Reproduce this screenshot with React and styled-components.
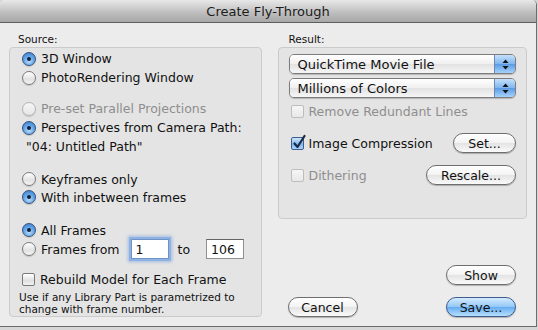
import React from 'react';
import styled, { createGlobalStyle } from 'styled-components';

const GlobalStyle = createGlobalStyle`
body{
  margin:0;
  background:#d6d6d6;
  font-family:"DejaVu Sans","Liberation Sans",sans-serif;
}
`;

const Window = styled.div`
width:536px;
height:326px;
background:#ececec;
border-right:1px solid #6d6d6d;
border-bottom:1px solid #6d6d6d;
border-radius:5px 5px 0 0;
overflow:hidden;
display:flex;
flex-direction:column;
box-sizing:content-box;
`;

const TitleBar = styled.div`
height:22px;
flex-shrink:0;
display:flex;
align-items:center;
justify-content:center;
background:linear-gradient(#e8e8e8,#bcbcbc 60%,#a8a8a8);
border-bottom:1px solid #5e5e5e;
font-size:13px;
color:#1c1c1c;
`;

const Body = styled.div`
flex:1;
display:flex;
flex-direction:row;
gap:16px;
padding:10px 9px 0 9px;
`;

const Column = styled.div`
display:flex;
flex-direction:column;
width:${p => p.w}px;
`;

const GroupLabel = styled.div`
font-size:10.5px;
line-height:13px;
color:#111;
padding-left:${p => p.indent}px;
margin-bottom:1px;
`;

const GroupBox = styled.div`
display:flex;
flex-direction:column;
background:#e4e4e4;
border:1px solid #cbcbcb;
border-radius:4px;
height:${p => p.h}px;
box-sizing:border-box;
padding:${p => p.pad};
`;

const Row = styled.div`
display:flex;
align-items:center;
height:${p => p.h || 19}px;
margin-top:${p => p.mt || 0}px;
font-size:12.5px;
color:${p => (p.disabled ? '#8e8e8e' : '#111')};
white-space:nowrap;
`;

const RadioDot = styled.span`
width:14px;
height:14px;
border-radius:50%;
box-sizing:border-box;
flex-shrink:0;
margin-right:5px;
display:flex;
align-items:center;
justify-content:center;
border:1px solid ${p => (p.on ? '#33527f' : p.disabled ? '#b4b4b4' : '#7a7a7a')};
background:${p =>
    p.on
      ? 'radial-gradient(circle at 50% 70%,#b8dcfb,#5d9fe4 55%,#3b78c8)'
      : p.disabled
      ? 'linear-gradient(#f6f6f6,#e6e6e6)'
      : 'linear-gradient(#ffffff,#e2e2e2 60%,#f4f4f4)'};
box-shadow:0 1px 1px rgba(0,0,0,0.15);
&::after{
  content:'';
  display:${p => (p.on ? 'block' : 'none')};
  width:4px;
  height:4px;
  border-radius:50%;
  background:#10213a;
}
`;

const CheckBox = styled.span`
width:13px;
height:13px;
border-radius:2px;
box-sizing:border-box;
flex-shrink:0;
margin-right:5px;
position:relative;
border:1px solid ${p => (p.on ? '#3c5f90' : p.disabled ? '#bdbdbd' : '#7a7a7a')};
background:${p =>
    p.on
      ? 'linear-gradient(#cfe6fc,#7fb7ef 55%,#a9d2f8)'
      : p.disabled
      ? 'linear-gradient(#f6f6f6,#e8e8e8)'
      : 'linear-gradient(#ffffff,#e0e0e0 60%,#f2f2f2)'};
`;

const Tick = styled.svg`
position:absolute;
left:0;
top:-4px;
`;

const PathName = styled.div`
font-size:12.5px;
color:#111;
height:19px;
display:flex;
align-items:center;
padding-left:4px;
`;

const NumField = styled.input`
width:38px;
height:20px;
box-sizing:border-box;
border:1px solid ${p => (p.focus ? '#6f93c6' : '#8f8f8f')};
border-top-color:${p => (p.focus ? '#6f93c6' : '#666')};
background:#fff;
font-family:inherit;
font-size:12.5px;
padding:0 4px;
outline:none;
color:#111;
margin-left:${p => p.ml || 0}px;
box-shadow:${p => (p.focus ? '0 0 0 2px #8db2e3, 0 0 3px 3px rgba(120,160,220,0.6)' : 'none')};
`;

const ToText = styled.span`
margin:0 16px 0 9px;
`;

const Note = styled.div`
font-size:10.5px;
line-height:12px;
color:#111;
margin-left:-3px;
margin-top:3px;
`;

const Popup = styled.div`
height:20px;
box-sizing:border-box;
display:flex;
align-items:stretch;
border:1px solid #7c7c7c;
border-radius:5px;
overflow:hidden;
margin-bottom:${p => p.mb || 0}px;
box-shadow:0 1px 1px rgba(0,0,0,0.2);
`;

const PopupText = styled.div`
flex:1;
display:flex;
align-items:center;
padding-left:8px;
font-size:13px;
color:#111;
background:linear-gradient(#ffffff,#f0f0f0 50%,#e2e2e2 51%,#f6f6f6);
`;

const PopupArrows = styled.div`
width:20px;
display:flex;
align-items:center;
justify-content:center;
border-left:1px solid #6f86ad;
background:linear-gradient(#c5e1fb,#7fb5ef 50%,#5a9be6 51%,#a6d2fb);
`;

const Spread = styled.div`
display:flex;
align-items:center;
justify-content:space-between;
margin-top:${p => p.mt || 0}px;
padding-left:${p => p.pl || 0}px;
`;

const PillButton = styled.button`
width:${p => p.w}px;
height:20px;
box-sizing:border-box;
border-radius:10px;
border:1px solid ${p => (p.primary ? '#3e5c8e' : '#6e6e6e')};
background:${p =>
    p.primary
      ? 'linear-gradient(#d5ebfd,#92c7f7 50%,#66acf0 51%,#b6e0fe)'
      : 'linear-gradient(#ffffff,#f3f3f3 50%,#e3e3e3 51%,#fafafa)'};
box-shadow:0 1px 1px rgba(0,0,0,0.25);
font-family:inherit;
font-size:12.5px;
color:#111;
padding:0;
`;

const BottomArea = styled.div`
flex:1;
display:flex;
flex-direction:column;
justify-content:flex-end;
padding:0 11px 9px 10px;
gap:12px;
`;

const RightAlign = styled.div`
display:flex;
justify-content:flex-end;
`;

const Radio = ({ on, disabled, children, h, mt }) => (
  <Row disabled={disabled} h={h} mt={mt}>
    <RadioDot on={on} disabled={disabled} />
    {children}
  </Row>
);

const Check = ({ on, disabled, children }) => (
  <>
    <CheckBox on={on} disabled={disabled}>
      {on && (
        <Tick width="15" height="16" viewBox="0 0 15 16">
          <path d="M2.5 9.5 L5.5 13 L12.5 2" fill="none" stroke="#1a2a44" strokeWidth="2.2" strokeLinecap="round" strokeLinejoin="round" />
        </Tick>
      )}
    </CheckBox>
    <span>{children}</span>
  </>
);

const Arrows = () => (
  <svg width="7" height="11" viewBox="0 0 7 11">
    <path d="M3.5 0.5 L6.5 4 L0.5 4 Z" fill="#111" />
    <path d="M3.5 10.5 L6.5 7 L0.5 7 Z" fill="#111" />
  </svg>
);

export default function App() {
  return (
    <>
      <GlobalStyle />
      <Window>
        <TitleBar>Create Fly-Through</TitleBar>
        <Body>
          <Column w={253}>
            <GroupLabel indent={9}>Source:</GroupLabel>
            <GroupBox h={270} pad="1px 0 0 12px">
              <Radio on>3D Window</Radio>
              <Radio>PhotoRendering Window</Radio>
              <Radio disabled mt={12}>Pre-set Parallel Projections</Radio>
              <Radio on>Perspectives from Camera Path:</Radio>
              <PathName>"04: Untitled Path"</PathName>
              <Radio mt={14} h={18}>Keyframes only</Radio>
              <Radio on h={18}>With inbetween frames</Radio>
              <Radio on mt={15} h={18}>All Frames</Radio>
              <Radio h={20}>
                Frames from
                <NumField focus defaultValue="1" ml={11} />
                <ToText>to</ToText>
                <NumField defaultValue="106" />
              </Radio>
              <Row mt={11} h={18}>
                <Check>Rebuild Model for Each Frame</Check>
              </Row>
              <Note>
                Use if any Library Part is parametrized to
                <br />
                change with frame number.
              </Note>
            </GroupBox>
          </Column>
          <Column w={250}>
            <GroupLabel indent={11}>Result:</GroupLabel>
            <GroupBox h={172} pad="6px 10px 0 10px">
              <Popup mb={4}>
                <PopupText>QuickTime Movie File</PopupText>
                <PopupArrows><Arrows /></PopupArrows>
              </Popup>
              <Popup>
                <PopupText>Millions of Colors</PopupText>
                <PopupArrows><Arrows /></PopupArrows>
              </Popup>
              <Spread mt={4} pl={2}>
                <Row disabled h={19}>
                  <Check disabled>Remove Redundant Lines</Check>
                </Row>
              </Spread>
              <Spread mt={12} pl={2}>
                <Row h={20}>
                  <Check on>Image Compression</Check>
                </Row>
                <PillButton w={63}>Set...</PillButton>
              </Spread>
              <Spread mt={12} pl={2}>
                <Row disabled h={20}>
                  <Check disabled>Dithering</Check>
                </Row>
                <PillButton w={90}>Rescale...</PillButton>
              </Spread>
            </GroupBox>
            <BottomArea>
              <RightAlign>
                <PillButton w={70}>Show</PillButton>
              </RightAlign>
              <Spread>
                <PillButton w={70}>Cancel</PillButton>
                <PillButton w={70} primary>Save...</PillButton>
              </Spread>
            </BottomArea>
          </Column>
        </Body>
      </Window>
    </>
  );
}
